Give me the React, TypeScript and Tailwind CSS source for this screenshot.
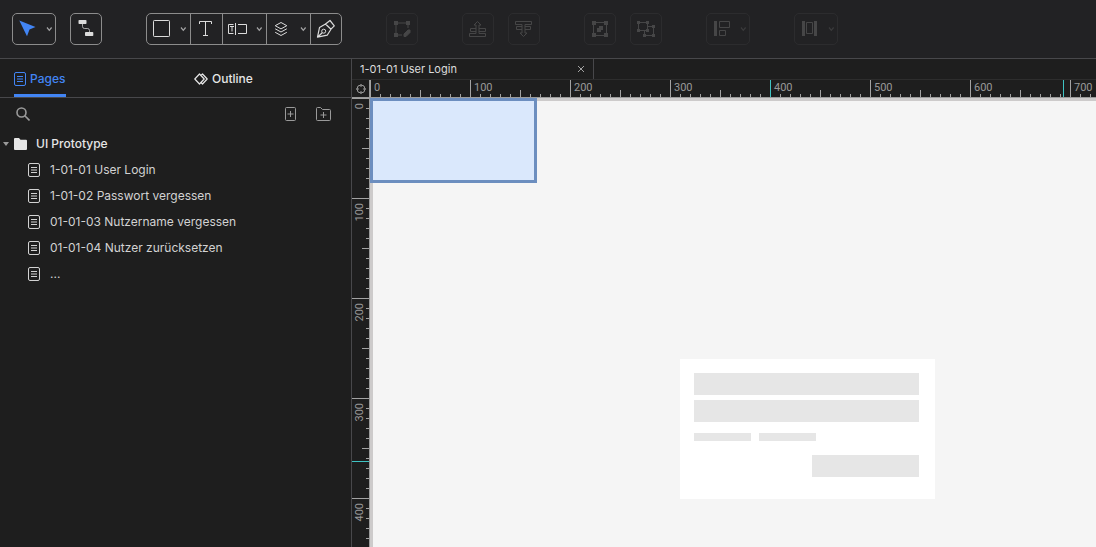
import { useEffect, useState } from "react";
import type { ReactNode } from "react";

type ToolProps = {
  label: string;
  children: ReactNode;
  menu?: boolean;
  disabled?: boolean;
};

const pages = [
  "1-01-01 User Login",
  "1-01-02 Passwort vergessen",
  "01-01-03 Nutzername vergessen",
  "01-01-04 Nutzer zurücksetzen",
  "...",
];

const steps = [10, 20, 30, 40, 50, 60, 70, 80, 90];

// Ruler values needed to fill the given length, one per 100px
const hundreds = (length: number) => Array.from({ length: Math.max(1, Math.ceil(length / 100)) }, (_, i) => i * 100);

const Icon = ({ children }: { children: ReactNode }) => (
  <svg className="size-[30px] shrink-0" viewBox="0 0 30 30" fill="none" stroke="currentColor" aria-hidden="true">
    {children}
  </svg>
);

const Chevron = () => (
  <svg className="h-[30px] w-3 shrink-0 opacity-70" viewBox="0 0 12 30" fill="none" stroke="currentColor" strokeWidth="1.2" aria-hidden="true">
    <path d="M4 13.5l2.3 2.8 2.3-2.8" />
  </svg>
);

// Stand-alone toolbar button with its own frame
const Tool = ({ label, children, menu, disabled }: ToolProps) => (
  <button
    type="button"
    aria-label={label}
    disabled={disabled}
    className={`flex h-8 items-center rounded-[5px] border ${menu ? "w-11" : "w-8"} ${
      disabled ? "border-[#2c2c2e] text-[#464647]" : "border-[#8c8c8c] text-[#dcdcdc]"
    }`}
  >
    {children}
    {menu && <Chevron />}
  </button>
);

// Segment of the joined shape group
const GroupTool = ({ label, children, menu }: ToolProps) => (
  <button
    type="button"
    aria-label={label}
    className={`flex h-[30px] items-center border-r border-[#8c8c8c] last:w-[30px] last:border-r-0 ${menu ? "w-11" : "w-8"}`}
  >
    {children}
    {menu && <Chevron />}
  </button>
);

const PageIcon = () => (
  <svg className="h-[14px] w-3 shrink-0" viewBox="0 0 12 14" fill="none" stroke="currentColor" aria-hidden="true">
    <rect x="0.5" y="0.5" width="11" height="13" rx="1.5" />
    <path d="M3 4.5h6M3 7h6M3 9.5h6" />
  </svg>
);

const Toolbar = () => (
  <header className="flex h-[59px] shrink-0 items-center gap-11 border-b border-[#48484b] bg-[#222224] px-3">
    <div className="flex gap-[14px]">
      <Tool label="Select" menu>
        <Icon>
          <path d="M6.3 6.5L22.5 13l-6 2.5L14 22.2z" fill="#4285f4" stroke="none" />
        </Icon>
      </Tool>
      <Tool label="Connector">
        <Icon>
          <rect x="7.5" y="6" width="8" height="4" rx="0.8" fill="currentColor" stroke="none" />
          <rect x="14" y="18" width="8.3" height="4" rx="0.8" fill="currentColor" stroke="none" />
          <path d="M11.5 10v2.5q0 2 2 2H16.5q2 0 2 2V18" strokeOpacity="0.7" />
        </Icon>
      </Tool>
    </div>

    <div className="flex rounded-[5px] border border-[#8c8c8c] text-[#dcdcdc]">
      <GroupTool label="Shape" menu>
        <Icon>
          <rect x="6.5" y="6.5" width="16" height="16" rx="0.8" />
        </Icon>
      </GroupTool>
      <GroupTool label="Text">
        <Icon>
          <path d="M8.5 10V7.5H20.5V10M14.5 7.5V21.5M12 21.5H17" />
        </Icon>
      </GroupTool>
      <GroupTool label="Form field" menu>
        <Icon>
          <path d="M10.5 10.5H5.5V19.5H10.5M7 12.5H11M9 12.5V17.5M12.5 9V21M15 10.5H23.5V19.5H15" />
        </Icon>
      </GroupTool>
      <GroupTool label="Components" menu>
        <Icon>
          <path
            d="M14 8.5l5.8 3.2-5.8 3.2-5.8-3.2zM8.2 14.8l5.8 3.2 5.8-3.2M8.2 18.3l5.8 3.2 5.8-3.2"
            strokeLinejoin="round"
          />
        </Icon>
      </GroupTool>
      <GroupTool label="Pen">
        <Icon>
          <path
            d="M14.5 10L19 6.5l4.3 5.3L20 15.2zM14.5 10L8.5 13.5 6.5 23.2l9.7-2L20 15.2M6.5 23.2l4.7-4.5"
            strokeWidth="1.2"
            strokeLinejoin="round"
          />
          <circle cx="12.7" cy="17.2" r="2" />
        </Icon>
      </GroupTool>
    </div>

    <Tool label="Edit path" disabled>
      <Icon>
        <path d="M9 9H21V14M9 9V21H15" />
        <path d="M7 7h4v4H7zM19 7h4v4h-4zM7 19h4v4H7z" fill="currentColor" stroke="none" />
        <path d="M17 22.5v-2.500l4-4h2v2.500l-4 4z" fill="currentColor" />
      </Icon>
    </Tool>

    <div className="flex gap-[14px]">
      <Tool label="Bring to front" disabled>
        <Icon>
          <path d="M6.5 19.5H13V11H11L14.5 7.5 18 11H16V19.5H22.5V22.5H6.5zM13 14.5H7.5V17.5H13M16 14.5H22.5V17.5H16" />
        </Icon>
      </Tool>
      <Tool label="Send to back" disabled>
        <Icon>
          <path d="M6.5 7.5H22.5V10.5H16V19H18L14.5 22.5 11 19H13V10.5H6.5zM13 12.5H7.5V15.5H13M16 12.5H21.5V15.5H16" />
        </Icon>
      </Tool>
    </div>

    <div className="flex gap-[14px]">
      <Tool label="Group" disabled>
        <Icon>
          <path d="M8.5 8.5H21.5V21.5H8.5z" />
          <path
            d="M7 7h4v4H7zM19 7h4v4h-4zM7 19h4v4H7zM19 19h4v4h-4zM14 12h4v4h-2v2h-4v-4h2z"
            fill="currentColor"
            stroke="none"
          />
        </Icon>
      </Tool>
      <Tool label="Ungroup" disabled>
        <Icon>
          <path d="M7.5 8.5H16.5V16.5H7.5zM16.5 12.5H22.5V21.5H13.5V16.5" />
          <path
            d="M6 7h3v3H6zM15 7h3v3h-3zM6 15h3v3H6zM15 15h3v3h-3zM21 11h3v3h-3zM12 20h3v3h-3zM21 20h3v3h-3z"
            fill="currentColor"
            stroke="none"
          />
        </Icon>
      </Tool>
    </div>

    <Tool label="Align" menu disabled>
      <Icon>
        <path d="M7 7h3v15H7z" fill="currentColor" stroke="none" />
        <path d="M12.5 7.5H22.5V13.5H12.5zM12.5 16.5H18.5V21.5H12.5z" />
      </Icon>
    </Tool>
    <Tool label="Distribute" menu disabled>
      <Icon>
        <path d="M7 7h3v15H7zM19 7h3v15h-3z" fill="currentColor" stroke="none" />
        <path d="M11.5 8.5H17.5V19.5H11.5z" />
      </Icon>
    </Tool>
  </header>
);

const Sidebar = () => (
  <aside className="w-[352px] shrink-0 border-r border-[#48484b] text-[12px] leading-4 text-[#d2d2d2]">
    <div className="flex h-[39px] gap-32 border-b border-[#48484b] pl-[14px] font-medium" role="tablist">
      <button
        type="button"
        role="tab"
        aria-selected="true"
        className="flex w-[52px] items-center gap-1 border-b-3 border-[#4285f4] pt-[5px] text-[#4285f4]"
      >
        <PageIcon />
        Pages
      </button>
      <button type="button" role="tab" aria-selected="false" className="flex items-center gap-1 pt-[2px] text-[#e6e6e6]">
        <svg
          className="h-3 w-[14px]"
          viewBox="0 0 14 12"
          fill="none"
          stroke="currentColor"
          strokeWidth="1.2"
          strokeLinejoin="round"
          aria-hidden="true"
        >
          <path d="M5.5 1L.8 6l4.7 5 4.7-5zM7 2.500L8.500 1l4.700 5-4.700 5L7 9.500" />
        </svg>
        Outline
      </button>
    </div>

    <div className="flex h-[33px] items-center pr-5 pb-px pl-4 text-[#9a9a9a]">
      <button type="button" aria-label="Search" className="mr-auto">
        <svg className="size-[14px]" viewBox="0 0 14 14" fill="none" stroke="currentColor" strokeWidth="1.6" aria-hidden="true">
          <circle cx="5.5" cy="5.5" r="4.5" />
          <path d="M8.8 8.8l4.7 4.7" />
        </svg>
      </button>
      <button type="button" aria-label="Add page" className="mr-5">
        <svg className="h-[14px] w-[11px]" viewBox="0 0 11 14" fill="none" stroke="currentColor" aria-hidden="true">
          <rect x="0.5" y="0.5" width="10" height="13" rx="1" />
          <path d="M5.5 4v6M2.500 7h6" />
        </svg>
      </button>
      <button type="button" aria-label="Add folder">
        <svg className="h-[14px] w-[15px]" viewBox="0 0 15 14" fill="none" stroke="currentColor" aria-hidden="true">
          <path d="M1.5.5H4.5l2 2H13.5q1 0 1 1V12.5q0 1-1 1H1.5q-1 0-1-1V1.500q0-1 1-1zM7.5 5v6M4.5 8h6" />
        </svg>
      </button>
    </div>

    <button type="button" aria-expanded="true" className="flex h-[26px] items-center pl-[3px] font-medium text-[#e6e6e6]">
      <svg className="mr-[5px] h-1 w-[6px]" viewBox="0 0 6 4" fill="#9a9a9a" aria-hidden="true">
        <path d="M0 0h6L3 4z" />
      </svg>
      <svg className="mr-[9px] h-3 w-[13px]" viewBox="0 0 13 12" fill="currentColor" aria-hidden="true">
        <path d="M1 0H5L6.5 1.8H12q1 0 1 1V11q0 1-1 1H1q-1 0-1-1V1q0-1 1-1z" />
      </svg>
      UI Prototype
    </button>
    <ul>
      {pages.map((name) => (
        <li key={name}>
          <a href="#" className="flex h-[26px] items-center gap-[10px] pl-7">
            <PageIcon />
            {name}
          </a>
        </li>
      ))}
    </ul>
  </aside>
);

const HorizontalRuler = ({ values }: { values: number[] }) => (
  <div className="relative flex h-[18px] min-w-0 flex-1 overflow-hidden border-b border-[#9b9b9b]">
    {values.map((value) => (
      <div key={value} className="relative w-[100px] shrink-0 pl-1 leading-4">
        {value}
        <svg className="absolute inset-0 h-[17px] w-[100px]" stroke="#a3a3a3" aria-hidden="true">
          <path d="M.5 0V17" stroke={value === 400 ? "#3fc4c4" : "#a3a3a3"} />
          {steps.map((x) => (
            <path key={x} d={`M${x + 0.5} ${x === 50 ? 10 : 14}V17`} />
          ))}
        </svg>
      </div>
    ))}
    <span className="absolute top-0 left-[693px] h-[17px] w-px bg-[#3fc4c4]" />
  </div>
);

const VerticalRuler = ({ values }: { values: number[] }) => (
  <div className="relative w-[18px] shrink-0 overflow-hidden border-r border-[#9b9b9b]">
    {values.map((value) => (
      <div key={value} className="relative h-[100px] w-[17px] pt-[5px]">
        <span className="block rotate-180 leading-4 [writing-mode:vertical-rl]">{value}</span>
        <svg className="absolute inset-0 h-[100px] w-[17px]" stroke="#a3a3a3" aria-hidden="true">
          <path d="M0 .5H17" />
          {steps.map((y) => (
            <path key={y} d={`M${y === 50 ? 10 : 14} ${y + 0.5}H17`} />
          ))}
        </svg>
      </div>
    ))}
    <span className="absolute top-[363px] left-0 h-px w-[17px] bg-[#3fc4c4]" />
  </div>
);

// Artboard: shapes are placed freely on the canvas
const Canvas = () => (
  <main className="relative min-w-0 flex-1 overflow-hidden bg-[#f5f5f5] shadow-[inset_3px_3px_0_#cdcbcb]">
    <div className="absolute top-0 left-0 h-[85px] w-[167px] border-3 border-[#6c8ebf] bg-[#dae8fc]" />
    <div className="absolute top-[261px] left-[310px] flex w-[255px] flex-col bg-white pt-[14px] pr-4 pb-[22px] pl-[14px]">
      <div className="h-[22px] bg-[#e6e6e6]" />
      <div className="mt-[5px] h-[22px] bg-[#e6e6e6]" />
      <div className="mt-[11px] flex gap-2">
        <div className="h-2 w-[57px] bg-[#e6e6e6]" />
        <div className="h-2 w-[57px] bg-[#e6e6e6]" />
      </div>
      <div className="mt-[14px] h-[22px] w-[107px] self-end bg-[#e6e6e6]" />
    </div>
  </main>
);

const App = () => {
  const [size, setSize] = useState({ width: window.innerWidth, height: window.innerHeight });

  useEffect(() => {
    const onResize = () => setSize({ width: window.innerWidth, height: window.innerHeight });
    window.addEventListener("resize", onResize);
    return () => window.removeEventListener("resize", onResize);
  }, []);

  return (
    <div className="flex h-screen flex-col overflow-hidden bg-[#1e1e1e] font-['Inter',sans-serif]">
      <Toolbar />
      <div className="flex min-h-0 flex-1">
        <Sidebar />
        <section className="flex min-w-0 flex-1 flex-col">
          <div className="flex h-[21px] shrink-0 border-b border-[#2d2d2d] text-[11px] leading-5 text-[#dcdcdc]">
            <div className="flex w-[242px] items-center justify-between border-r border-[#48484b] pr-2 pl-2">
              1-01-01 User Login
              <button type="button" aria-label="Close tab" className="text-[#a3a3a3]">
                <svg className="size-2" viewBox="0 0 8 8" stroke="currentColor" aria-hidden="true">
                  <path d="M1 1l6 6M7 1L1 7" />
                </svg>
              </button>
            </div>
          </div>
          <div className="flex shrink-0 font-['Roboto',sans-serif] text-[11px] text-[#999999]">
            <div className="flex h-[18px] w-[18px] items-center justify-center border-r border-b border-[#9b9b9b]">
              <svg className="size-[10px]" viewBox="0 0 10 10" fill="none" stroke="currentColor" aria-hidden="true">
                <circle cx="5" cy="5" r="4" />
                <path d="M5 0v3M5 7v3M0 5h3M7 5h3" />
              </svg>
            </div>
            <HorizontalRuler values={hundreds(size.width - 370)} />
          </div>
          <div className="flex min-h-0 flex-1 font-['Roboto',sans-serif] text-[11px] text-[#999999]">
            <VerticalRuler values={hundreds(size.height - 98)} />
            <Canvas />
          </div>
        </section>
      </div>
    </div>
  );
};

export default App;
